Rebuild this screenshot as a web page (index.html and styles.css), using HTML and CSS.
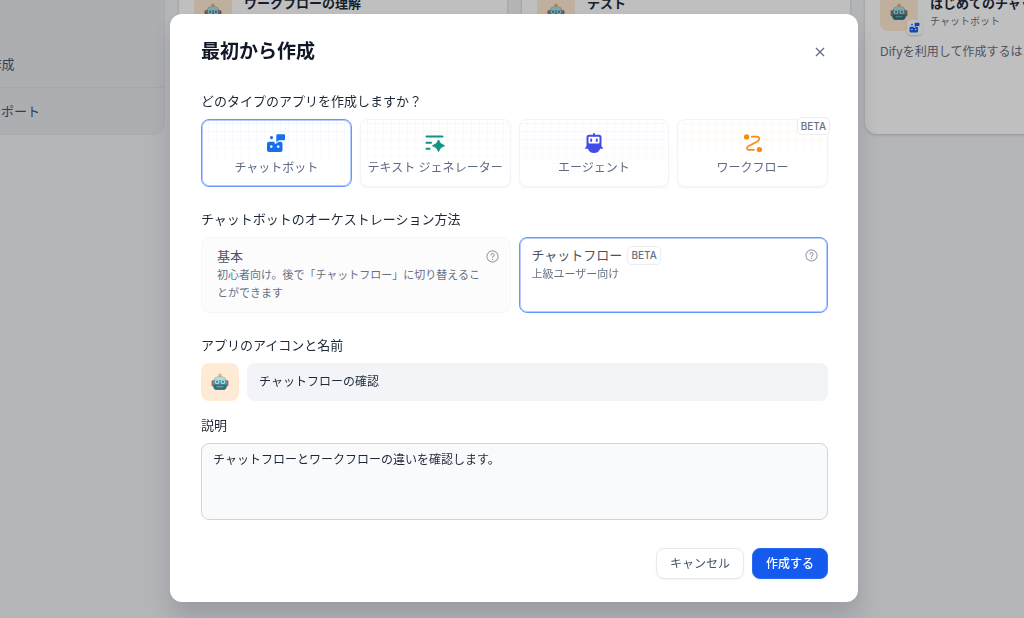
FILE: index.html
```html
<!DOCTYPE html>
<html lang="ja">
<head>
<meta charset="utf-8">
<meta name="viewport" content="width=device-width, initial-scale=1">
<title>最初から作成</title>
<link rel="stylesheet" href="styles.css">
</head>
<body>
<svg class="defs" aria-hidden="true">
  <symbol id="robot" viewBox="0 0 18 18">
    <path d="M9 1.2v4" stroke="#e8883a" stroke-width="1.6"/>
    <circle cx="9" cy="2" r="1.6" fill="#f6b13c"/>
    <rect x="0.6" y="7.2" width="3" height="6" rx="1.2" fill="#a8625c"/>
    <rect x="14.4" y="7.2" width="3" height="6" rx="1.2" fill="#a8625c"/>
    <path d="M4.6 4.2Q9 2.4 13.4 4.2Q15.9 6.500 15.900 11Q15.900 16.800 12.800 16.800H5.200Q2.100 16.800 2.100 11Q2.100 6.500 4.600 4.200Z" fill="#5d9ba5"/>
    <path d="M4.800 4.400Q9 2.600 13.200 4.400L14.600 7H3.400Z" fill="#b8d8dc"/>
    <path d="M2.200 11.500H15.800Q15.600 16.800 12.800 16.800H5.200Q2.400 16.800 2.200 11.500Z" fill="#2f717c"/>
    <circle cx="6.100" cy="8.800" r="2.300" fill="#a9e6ec"/><circle cx="11.900" cy="8.800" r="2.300" fill="#a9e6ec"/>
    <circle cx="6.100" cy="8.800" r="1.200" fill="#3590a3"/><circle cx="11.900" cy="8.800" r="1.200" fill="#3590a3"/>
    <path d="M9 9.300l1.200 2.200H7.800Z" fill="#e5533f"/>
    <path d="M5.600 13.600h6.800" stroke="#5fa9ac" stroke-width="1.300"/>
  </symbol>
  <symbol id="chat" viewBox="0 0 20 20">
    <circle cx="5.500" cy="4.600" r="1.600"/>
    <path d="M11.500 1.200H18Q19 1.200 19 2.200V6.200Q19 7.200 18 7.200H13L10.300 9.200V2.400Q10.300 1.200 11.500 1.200Z"/>
    <path fill-rule="evenodd" d="M3 8.800H8.600V10.300Q9.200 11.200 10.300 10.500L12.600 8.800H14.500Q16.500 8.800 16.500 10.800V17Q16.500 19 14.500 19H3Q1 19 1 17V10.800Q1 8.800 3 8.800ZM5.300 12.300a1.300 1.300 0 1 0 .01 0ZM12.200 12.300a1.300 1.300 0 1 0 .01 0Z"/>
  </symbol>
  <symbol id="help" viewBox="0 0 14 14">
    <g fill="none" stroke="currentColor" stroke-width="1.200" stroke-linecap="round" stroke-linejoin="round"><circle cx="7" cy="7" r="6"/><path d="M5.400 5.500a1.650 1.650 0 1 1 2.500 1.400Q7 7.300 7 8.100"/></g>
    <circle cx="7" cy="10.100" r=".8" fill="currentColor"/>
  </symbol>
</svg>

<main class="apps">
  <nav class="app-card create-card">
    <a href="#template">テンプレートから作成</a>
    <a href="#import">DSLファイルをインポート</a>
  </nav>
  <article class="app-card">
    <div class="app-head">
      <span class="app-icon"><svg class="robot"><use href="#robot"/></svg></span>
      <div><h2>ワークフローの理解</h2></div>
    </div>
  </article>
  <article class="app-card">
    <div class="app-head">
      <span class="app-icon"><svg class="robot"><use href="#robot"/></svg></span>
      <div><h2>テスト</h2></div>
    </div>
  </article>
  <article class="app-card">
    <div class="app-head">
      <span class="app-icon"><svg class="robot"><use href="#robot"/></svg><span class="mode"><svg><use href="#chat"/></svg></span></span>
      <div><h2>はじめてのチャットボット</h2><p class="kind">チャットボット</p></div>
    </div>
    <p class="summary">Difyを利用して作成するはじめてのチャットボット</p>
  </article>
</main>

<div class="overlay">
  <form class="modal" role="dialog" aria-modal="true" aria-labelledby="dialog-title">
    <header class="modal-head">
      <h1 id="dialog-title">最初から作成</h1>
      <button type="button" class="close" aria-label="閉じる"><svg viewBox="0 0 16 16"><path d="M4 4l8 8M12 4l-8 8"/></svg></button>
    </header>

    <fieldset class="section">
      <legend>どのタイプのアプリを作成しますか？</legend>
      <div class="types">
        <label class="type blue"><input type="radio" name="type" checked>
          <svg viewBox="0 0 20 20"><use href="#chat"/></svg><span>チャットボット</span></label>
        <label class="type teal"><input type="radio" name="type">
          <svg viewBox="0 0 20 20"><path d="M1.500 3.500h16M1.500 9.700h4.500M1.500 15.800h3.100" fill="none" stroke="currentColor" stroke-width="2" stroke-linecap="round"/><path d="M13.500 7Q14.600 11.400 19.500 12.700Q14.600 14 13.500 18.500Q12.400 14 7.500 12.700Q12.400 11.400 13.500 7Z" stroke="currentColor" stroke-linejoin="round"/></svg><span>テキスト ジェネレーター</span></label>
        <label class="type indigo"><input type="radio" name="type">
          <svg viewBox="0 0 20 20"><path d="M10 .8v2" stroke="currentColor" stroke-width="1.800" stroke-linecap="round"/><path fill-rule="evenodd" d="M5 1.800H15Q17.500 1.800 17.500 4.300V13L19.300 15.800H16.200Q14.500 20 10 20Q5.500 20 3.800 15.800H.7L2.500 13V4.300Q2.500 1.800 5 1.800ZM5.300 3.800Q4.500 3.800 4.500 4.600V9.300Q4.500 10.500 5.700 10.500H14.300Q15.500 10.500 15.500 9.300V4.600Q15.500 3.800 14.700 3.800Z"/><path d="M7.200 6.500v1.600M12.800 6.500v1.600" stroke="currentColor" stroke-width="1.900" stroke-linecap="round"/></svg><span>エージェント</span></label>
        <label class="type orange"><input type="radio" name="type">
          <svg viewBox="0 0 20 20"><circle cx="3.600" cy="3.900" r="2.700"/><circle cx="16.400" cy="16.600" r="2.700"/><path d="M8.800 3.700h4.800c3.200 0 3.600 2.800 1.200 4.600L5.300 13.300c-2.500 1.700-1.500 3.500.8 3.500h4.900" fill="none" stroke="currentColor" stroke-width="1.700" stroke-linecap="round"/></svg><span>ワークフロー</span><span class="beta corner">BETA</span></label>
      </div>
    </fieldset>

    <fieldset class="section">
      <legend>チャットボットのオーケストレーション方法</legend>
      <div class="methods">
        <label class="method basic"><input type="radio" name="method">
          <span class="method-title"><span>基本</span><svg class="help"><use href="#help"/></svg></span>
          <span class="method-note">初心者向け。後で「チャットフロー」に切り替えることができます</span></label>
        <label class="method"><input type="radio" name="method" checked>
          <span class="method-title"><span>チャットフロー</span><span class="beta">BETA</span><svg class="help"><use href="#help"/></svg></span>
          <span class="method-note">上級ユーザー向け</span></label>
      </div>
    </fieldset>

    <div class="section">
      <label class="caption" for="name">アプリのアイコンと名前</label>
      <div class="name-row">
        <button type="button" class="app-icon" aria-label="アイコンを変更"><svg class="robot"><use href="#robot"/></svg></button>
        <input class="name" id="name" type="text" value="チャットフローの確認">
      </div>
    </div>

    <div class="section description">
      <label class="caption" for="desc">説明</label>
      <textarea id="desc">チャットフローとワークフローの違いを確認します。</textarea>
    </div>

    <footer class="actions">
      <button type="button" class="btn">キャンセル</button>
      <button type="submit" class="btn primary">作成する</button>
    </footer>
  </form>
</div>
</body>
</html>
```

FILE: styles.css
```css
* { box-sizing: border-box; }

body {
  margin: 0;
  height: 100vh;
  overflow: hidden;
  background: #f0f2f5;
  color: #1d2939;
  font: 12px/18px Inter, "Noto Sans CJK JP", sans-serif;
}

h1, h2, p, fieldset { margin: 0; padding: 0; border: 0; }
legend { padding: 0; }
button, input, textarea { font: inherit; color: inherit; }
svg { flex: none; fill: currentColor; }
.defs { position: absolute; width: 0; height: 0; }

/* App list, scrolled behind the dialog */
.apps {
  display: grid;
  grid-template-columns: repeat(4, 328px);
  gap: 15px;
  margin: -22px 0 0 -164px;
}
.app-card {
  height: 156px;
  padding: 15px;
  border-radius: 12px;
  background: #fff;
  box-shadow: 0 1px 3px rgba(16, 24, 40, .2);
}
.create-card {
  display: flex;
  flex-direction: column;
  justify-content: flex-end;
  padding: 0;
  background: #e7e9ee;
  box-shadow: 0 0 0 1px #e2e4e9;
}
.create-card a {
  padding: 14px 49px;
  color: #475467;
  font-size: 13px;
  text-decoration: none;
}
.create-card a + a { border-top: 1px solid #dcdfe5; }
.app-head { display: flex; gap: 12px; }
.app-head h2 { font-size: 13px; line-height: 20px; white-space: nowrap; }
.app-head > div { overflow: hidden; }
.kind { color: #667085; font-size: 10px; line-height: 16px; }
.summary {
  overflow: hidden;
  margin-top: 12px;
  color: #667085;
  white-space: nowrap;
}
.app-icon {
  position: relative;
  display: flex;
  flex: none;
  align-items: center;
  justify-content: center;
  width: 38px;
  height: 38px;
  padding: 0;
  border: 0;
  border-radius: 8px;
  background: #ffead5;
}
.robot { width: 18px; height: 18px; }
.mode {
  position: absolute;
  right: -4px;
  bottom: -4px;
  display: flex;
  padding: 2px;
  border-radius: 4px;
  background: #fff;
  box-shadow: 0 1px 2px rgba(16, 24, 40, .2);
  color: #155eef;
}
.mode svg { width: 11px; height: 11px; }

/* Dialog */
.overlay {
  position: fixed;
  inset: 0;
  display: flex;
  align-items: center;
  justify-content: center;
  padding: 0 0 2px 4px;
  background: rgba(0, 0, 0, .25);
}
.modal {
  width: 100%;
  max-width: 688px;
  padding: 24px 30px 23px 31px;
  border-radius: 12px;
  background: #fff;
  box-shadow: 0 16px 24px rgba(16, 24, 40, .16);
}
.modal-head {
  display: flex;
  align-items: center;
  justify-content: space-between;
  margin-bottom: 25px;
}
h1 { color: #101828; font-size: 19px; line-height: 28px; }
.close {
  display: flex;
  padding: 0;
  border: 0;
  background: none;
  color: #667085;
}
.close svg { width: 16px; height: 16px; stroke: currentColor; stroke-width: 1.4; }

.section { margin-bottom: 22px; }
legend, .caption {
  display: block;
  margin-bottom: 8px;
  font-size: 13px;
  line-height: 20px;
}
.types { display: grid; grid-template-columns: repeat(4, 1fr); gap: 8px; }
.type, .method {
  position: relative;
  border: 1px solid #f2f4f7;
  border-radius: 8px;
  background: #fff;
}
.type {
  display: flex;
  flex-direction: column;
  align-items: center;
  gap: 6px;
  height: 68px;
  padding-top: 13px;
  background:
    linear-gradient(rgba(255, 255, 255, 0), #fff 95%),
    linear-gradient(90deg, var(--line) 1px, transparent 1px) 6px 3px / 8px 8px,
    linear-gradient(var(--line) 1px, transparent 1px) 6px 3px / 8px 8px,
    #fff;
  box-shadow: 0 1px 2px rgba(16, 24, 40, .05);
  color: #5d6b82;
  white-space: nowrap;
}
.type input, .method input { position: absolute; opacity: 0; }
.type svg { width: 20px; height: 20px; }
.blue { --line: #f3f8ff; }
.teal { --line: #f2f9fc; }
.indigo { --line: #f4f5ff; }
.orange { --line: #fff7f1; }
.blue svg { color: #1570ef; }
.teal svg { color: #0e9384; }
.indigo svg { color: #444ce7; }
.orange svg { color: #fb8b0e; }
.type:has(input:checked), .method:has(input:checked) {
  border-color: #6796ff;
  box-shadow: inset 0 0 0 1px #b5ccff;
}

.beta {
  padding: 0 3px;
  border: 1px solid #eaecf0;
  border-radius: 5px;
  background: #fff;
  color: #667085;
  font-size: 10px;
  font-weight: 500;
  line-height: 17px;
}
.corner { position: absolute; top: -3px; right: -3px; line-height: 16px; }

.methods { display: grid; grid-template-columns: repeat(2, 1fr); gap: 8px; }
.method { height: 76px; padding: 7px 9px 7px 12px; }
.basic {
  padding: 8px 11px 8px 15px;
  border-color: #f5f6f8;
  background: #fcfcfd;
}
.method-title {
  display: flex;
  align-items: center;
  gap: 5px;
  height: 20px;
  color: #475467;
  font-size: 13px;
}
.help { width: 13px; height: 13px; margin-left: auto; color: #98a2b3; }
.method-note { display: block; color: #667085; font-size: 11px; line-height: 18px; }
.basic .method-note { padding-right: 12px; }

.name-row { display: flex; gap: 8px; }
.name {
  flex: 1;
  min-width: 0;
  padding: 0 12px;
  border: 0;
  border-radius: 8px;
  background: #f2f4f7;
}
.section:has(.name) { margin-bottom: 14px; }
.description { margin-bottom: 28px; }
textarea {
  display: block;
  width: 100%;
  height: 77px;
  padding: 7px 11px;
  border: 1px solid #d0d5dd;
  border-radius: 8px;
  background: #f9fafb;
  resize: none;
}
.actions { display: flex; justify-content: flex-end; gap: 8px; }
.btn {
  height: 31px;
  padding: 0 13px;
  border: 1px solid #e7e9ed;
  border-radius: 8px;
  background: #fff;
  box-shadow: 0 1px 2px rgba(16, 24, 40, .05);
  color: #475467;
}
.primary { border-color: #2b6bf0; background: #155aef; color: #fff; font-weight: 500; }
```
